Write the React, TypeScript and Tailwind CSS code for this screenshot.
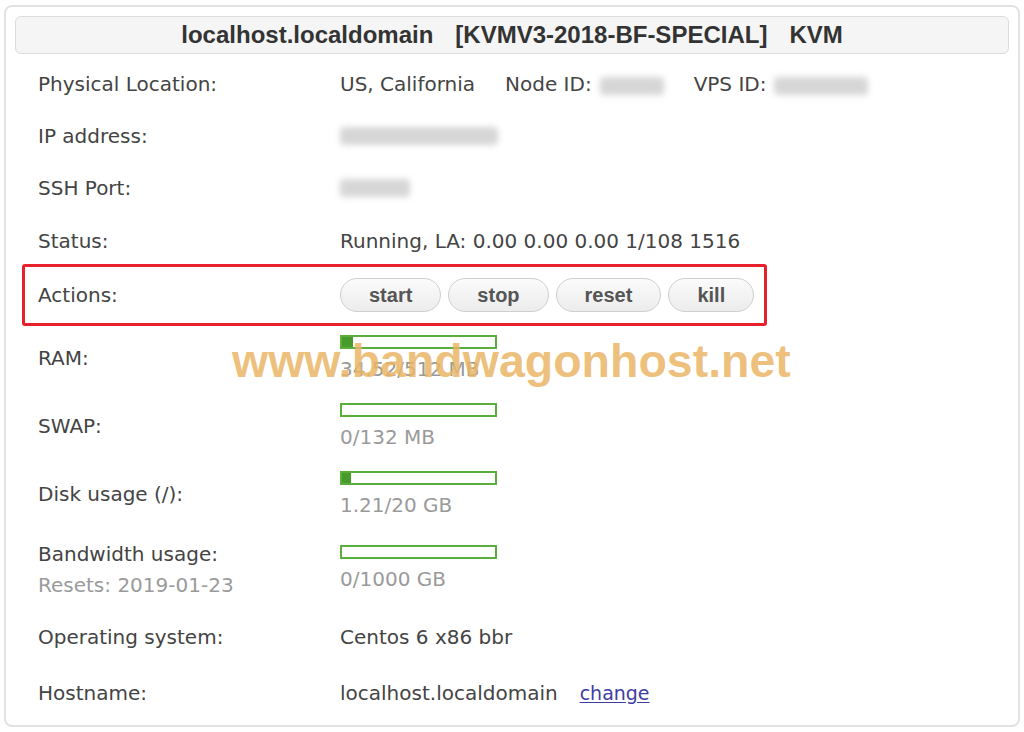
import React from 'react';

const labelFont = "font-['DejaVu_Sans',Verdana,sans-serif]";

function Bar({ pct, text }: { pct: number; text: string }) {
  return (
    <div className="flex flex-col">
      <div className="w-[157px] h-[14px] border-2 border-[#5aae3c] bg-white">
        <div className="h-full bg-[#469b2a]" style={{ width: `${pct}%` }} />
      </div>
      <div className="mt-[8px] leading-[24px] text-[#9a9a9a]">{text}</div>
    </div>
  );
}

function Blur({ w }: { w: number }) {
  return (
    <span
      className="inline-block h-[18px] rounded-[4px] bg-[#d6d6d6] blur-[3px] align-middle"
      style={{ width: w }}
    />
  );
}

function Row({ h, label, children }: { h: string; label: React.ReactNode; children: React.ReactNode }) {
  return (
    <div className={`flex items-center ${h}`}>
      <div className="w-[325px] pl-[23px] shrink-0">{label}</div>
      <div className="flex items-center">{children}</div>
    </div>
  );
}

const btn =
  "h-[34px] px-[28px] rounded-full border border-[#cfcfcf] bg-gradient-to-b from-[#fbfbfb] to-[#ececec] text-[20px] font-bold text-[#555] font-['Liberation_Sans',Arial,sans-serif] leading-none";

export default function App() {
  return (
    <div className="relative w-[1024px] h-[732px] bg-white pt-[5px] pl-[4px]">
      <div className={`w-[1016px] h-[722px] border-2 border-[#e2e2e2] rounded-[8px] p-[9px] ${labelFont} text-[20px] text-[#444]`}>
        <div className="h-[38px] rounded-[6px] border border-[#dcdcdc] bg-[#f5f5f5] flex items-center justify-center gap-[22px] font-['Liberation_Sans',Arial,sans-serif] font-bold text-[24px] text-[#333]">
          <span>localhost.localdomain</span>
          <span>[KVMV3-2018-BF-SPECIAL]</span>
          <span>KVM</span>
        </div>

        <div className="mt-[4px]">
          <Row h="h-[52px]" label="Physical Location:">
            <span>US, California</span>
            <span className="ml-[30px]">Node ID:</span>
            <span className="ml-[8px]"><Blur w={64} /></span>
            <span className="ml-[30px]">VPS ID:</span>
            <span className="ml-[8px]"><Blur w={94} /></span>
          </Row>
          <Row h="h-[52px]" label="IP address:">
            <Blur w={158} />
          </Row>
          <Row h="h-[52px]" label="SSH Port:">
            <Blur w={70} />
          </Row>
          <Row h="h-[54px]" label="Status:">
            <span>Running, LA: 0.00 0.00 0.00 1/108 1516</span>
          </Row>
          <Row h="h-[54px]" label="Actions:">
            <div className="flex gap-[7px]">
              <button className={btn}>start</button>
              <button className={btn}>stop</button>
              <button className={btn}>reset</button>
              <button className={btn}>kill</button>
            </div>
          </Row>
          <Row h="h-[72px]" label="RAM:">
            <Bar pct={7} text="34.52/512 MB" />
          </Row>
          <Row h="h-[64px]" label="SWAP:">
            <Bar pct={0} text="0/132 MB" />
          </Row>
          <Row h="h-[72px]" label="Disk usage (/):">
            <Bar pct={6} text="1.21/20 GB" />
          </Row>
          <Row
            h="h-[76px]"
            label={
              <div className="leading-[31px] mt-[4px]">
                <div>Bandwidth usage:</div>
                <div className="text-[#9a9a9a]">Resets: 2019-01-23</div>
              </div>
            }
          >
            <Bar pct={0} text="0/1000 GB" />
          </Row>
          <Row h="h-[62px]" label="Operating system:">
            <span>Centos 6 x86 bbr</span>
          </Row>
          <Row h="h-[50px]" label="Hostname:">
            <span>localhost.localdomain</span>
            <a href="#" className="ml-[22px] text-[19px] text-[#3d3da3] underline underline-offset-2">change</a>
          </Row>
        </div>
      </div>

      {/* annotation frame around the actions row */}
      <div className="absolute left-[22px] top-[264px] w-[745px] h-[62px] border-[3px] border-[#e8202b] rounded-[3px] pointer-events-none" />

      {/* watermark */}
      <div className="absolute left-[232px] top-[338px] leading-none text-[46.5px] font-bold font-['Liberation_Sans',Arial,sans-serif] text-[#eab665]/85 pointer-events-none whitespace-nowrap">
        www.bandwagonhost.net
      </div>
    </div>
  );
}
